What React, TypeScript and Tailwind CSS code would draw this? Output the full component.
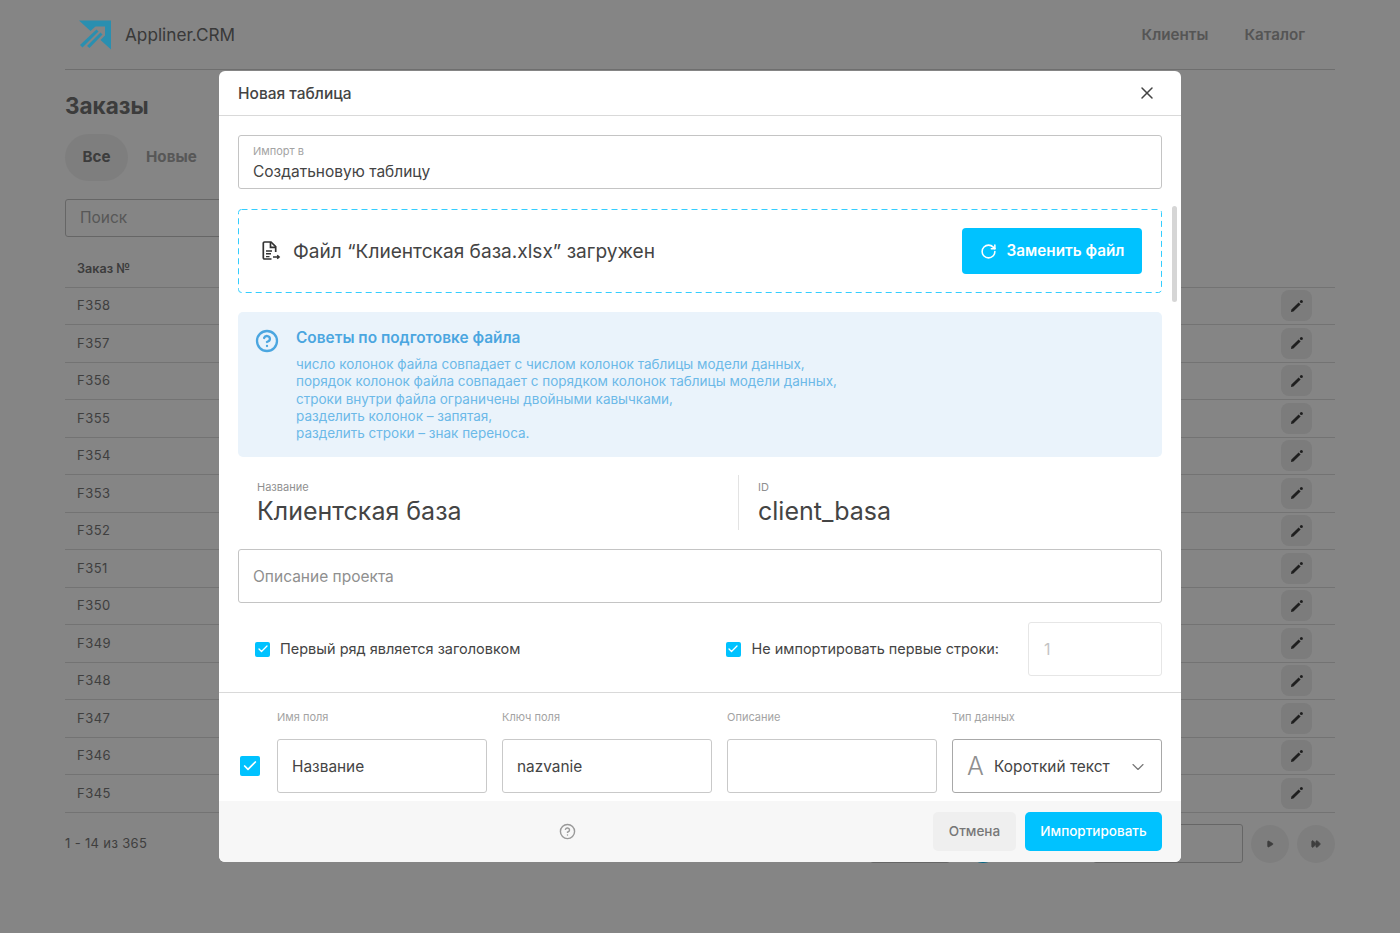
import React from 'react';
import { X, RotateCw, ChevronDown, Check, CircleHelp, Play, FastForward } from 'lucide-react';

const orders = ['F358', 'F357', 'F356', 'F355', 'F354', 'F353', 'F352', 'F351', 'F350', 'F349', 'F348', 'F347', 'F346', 'F345'];

const tips = [
  'число колонок файла совпадает с числом колонок таблицы модели данных,',
  'порядок колонок файла совпадает с порядком колонок таблицы модели данных,',
  'строки внутри файла ограничены двойными кавычками,',
  'разделить колонок – запятая,',
  'разделить строки – знак переноса.',
];

const Logo = () => (
  <svg width="32" height="30" viewBox="0 0 32 30" fill="none" className="relative z-10">
    <path d="M0 0.5H32V29.5L21.5 20L26 15.5V6.5H16.5L11.5 11Z" fill="#2a8fb0" />
    <path d="M1 25L17.5 9.5L19.5 11.5L3.5 27.5Z" fill="#2a8fb0" />
    <path d="M8 26L21.5 12.5L23.5 14.5L10.5 28Z" fill="#2a8fb0" />
  </svg>
);

const FileIcon = () => (
  <svg width="20" height="20" viewBox="0 0 20 20" fill="none" stroke="#333" strokeWidth="1.7">
    <path d="M10.5 18H3.5A1.2 1.2 0 0 1 2.3 16.8V2.2A1.2 1.2 0 0 1 3.5 1H10L14.7 5.7V11" />
    <path d="M9.5 1V6.3H14.7" />
    <path d="M5 10H11M5 12.8H10M5 15.6H8.5" strokeWidth="1.4" />
    <path d="M12 16H18M16.2 14.2L18.2 16L16.2 17.8" strokeWidth="1.4" />
  </svg>
);

const PenIcon = () => (
  <svg width="14" height="14" viewBox="0 0 14 14" fill="none">
    <path d="M1 13L1.4 10.6L8.6 3.4L10.6 5.4L3.4 12.6Z" fill="#3d3d3d" />
    <circle cx="11.4" cy="2.6" r="1.5" fill="#3d3d3d" />
  </svg>
);

const Checkbox = ({ big }: { big?: boolean }) => (
  <span className={big ? 'flex h-[20px] w-[20px] items-center justify-center rounded-[2px] bg-[#00c2ff]' : 'flex h-[15px] w-[15px] items-center justify-center rounded-[2px] bg-[#00c2ff]'}>
    <Check size={big ? 16 : 12} color="#fff" strokeWidth={2.6} />
  </span>
);

const Field = ({ label, value, width }: { label: string; value?: string; width: string }) => (
  <div className={`flex flex-col ${width}`}>
    <span className="mb-[15px] text-[11px] leading-[13px] text-[#a3a3a3]">{label}</span>
    <div className="flex h-[54px] items-center rounded-[3px] border border-[#c9c9c9] px-[14px] pt-[2px] text-[15.4px] text-[#444]">{value}</div>
  </div>
);

export default function App() {
  return (
    <div className="relative h-[933px] w-[1400px] overflow-hidden bg-white font-['Inter',sans-serif]">
      {/* page behind the dialog */}
      <div className="flex h-full flex-col px-[65px]">
        <header className="flex h-[70px] shrink-0 items-center justify-between border-b border-[#d4d4d4] pl-[14px] pr-[30px]">
          <div className="flex items-center gap-[14px]">
            <Logo />
            <span className="text-[17.2px] text-[#6e6e6e]">Appliner.CRM</span>
          </div>
          <nav className="mt-[1px] flex gap-[36px] text-[15.2px] font-semibold text-[#a3a3a3]">
            <span>Клиенты</span>
            <span>Каталог</span>
          </nav>
        </header>
        <h1 className="mt-[20px] text-[22.5px] font-bold leading-[32px] text-[#737373]">Заказы</h1>
        <div className="mt-[12px] flex items-center gap-[18px] text-[15.2px] font-bold">
          <span className="flex h-[47px] w-[63px] items-center justify-center rounded-full bg-[#f2f2f2] text-[#737373]">Все</span>
          <span className="text-[#a8a8a8]">Новые</span>
        </div>
        <div className="mt-[18px] flex h-[38px] w-[300px] items-center rounded-[3px] border border-[#c4c4c4] px-[14px] text-[15.5px] text-[#a8a8a8]">Поиск</div>
        <div className="mt-[12.5px] flex h-[38px] items-center border-b border-[#dcdcdc] px-[12px] pt-[2px] text-[12.6px] font-semibold text-[#737373]">Заказ №</div>
        {orders.map(o => (
          <div key={o} className="flex h-[37.5px] shrink-0 items-center justify-between border-b border-[#dcdcdc] pl-[12px] pr-[23px] text-[13px] tracking-[0.5px] text-[#7a7a7a]">
            <span>{o}</span>
            <span className="flex h-[31px] w-[31px] items-center justify-center rounded-[8px] bg-[#ededed]">
              <PenIcon />
            </span>
          </div>
        ))}
        <div className="mt-[11.5px] flex h-[39px] items-center text-[13px] tracking-[0.35px] text-[#7a7a7a]">
          <span>1 - 14 из 365</span>
          <div className="ml-auto flex items-center gap-[8px]">
            <span className="mr-[6px] h-[39px] w-[80px] rounded-[3px] border border-[#c4c4c4]" />
            <span className="mr-[83px] h-[38px] w-[38px] rounded-full bg-[#00c2ff]" />
            <span className="h-[39px] w-[150px] rounded-[3px] border border-[#c4c4c4]" />
            <span className="flex h-[38px] w-[38px] items-center justify-center rounded-full bg-[#f2f2f2]">
              <Play size={8} color="#777" fill="#777" />
            </span>
            <span className="flex h-[38px] w-[38px] items-center justify-center rounded-full bg-[#f2f2f2]">
              <FastForward size={10} color="#777" fill="#777" />
            </span>
          </div>
        </div>
      </div>

      {/* dim + dialog */}
      <div className="absolute inset-0 flex items-start justify-center bg-[rgba(0,0,0,0.48)] pt-[71px]">
        <div className="relative flex h-[791px] w-[962px] flex-col overflow-hidden rounded-[6px] bg-white text-[#444]">
          <div className="flex h-[45px] shrink-0 items-center justify-between border-b border-[#d9d9d9] pl-[19px] pr-[24px]">
            <span className="mt-[1px] text-[15.5px] font-medium">Новая таблица</span>
            <X size={20} color="#444" strokeWidth={1.8} />
          </div>

          <div className="min-h-0 flex-1 overflow-hidden">
            <div className="px-[19px] pt-[19px]">
              <div className="flex h-[54px] flex-col justify-center rounded-[3px] border border-[#c4c4c4] px-[14px] pt-[3px]">
                <span className="text-[11px] leading-[13px] text-[#a3a3a3]">Импорт в</span>
                <span className="mt-[4px] text-[15.5px] leading-[20px]">Создатьновую таблицу</span>
              </div>

              <div className="relative mt-[20px] flex h-[84px] items-center justify-between pl-[23px] pr-[20px]">
                <svg width="924" height="84" className="absolute left-0 top-0" fill="none">
                  <rect x="0.5" y="0.5" width="923" height="83" rx="3" stroke="#33ceff" strokeDasharray="6 4" />
                </svg>
                <div className="mt-[1px] flex items-center gap-[12px]">
                  <FileIcon />
                  <span className="text-[19.1px] text-[#444]">Файл “Клиентская база.xlsx” загружен</span>
                </div>
                <span className="flex h-[46px] w-[180px] items-center justify-center gap-[10px] rounded-[4px] bg-[#00c2ff] text-[15.3px] font-semibold text-white">
                  <RotateCw size={17} strokeWidth={2.2} />
                  Заменить файл
                </span>
              </div>

              <div className="mt-[19px] flex h-[145px] gap-[17px] rounded-[5px] bg-[#eaf3fb] pl-[17px] pt-[16px]">
                <CircleHelp size={24} color="#4ba6e0" strokeWidth={2.3} className="mt-[1px] shrink-0" />
                <div>
                  <div className="text-[15.4px] font-semibold leading-[20px] text-[#4ba6e0]">Советы по подготовке файла</div>
                  <div className="mt-[8px] text-[13.5px] leading-[17.3px] text-[#6cb9e8]">
                    {tips.map(t => <div key={t}>{t}</div>)}
                  </div>
                </div>
              </div>

              <div className="mt-[18px] flex h-[55px]">
                <div className="w-[500px] pl-[19px]">
                  <div className="pt-[6px] text-[11px] leading-[13px] text-[#8f8f8f]">Название</div>
                  <div className="mt-[1px] text-[25px] leading-[32px]">Клиентская база</div>
                </div>
                <div className="border-l border-[#e3e3e3] pl-[19px]">
                  <div className="pt-[6px] text-[11px] leading-[13px] text-[#8f8f8f]">ID</div>
                  <div className="mt-[1px] text-[25px] leading-[32px]">client_basa</div>
                </div>
              </div>

              <div className="mt-[19px] flex h-[54px] items-center rounded-[3px] border border-[#c4c4c4] px-[14px] pt-[2px] text-[15.5px] text-[#8f8f8f]">Описание проекта</div>

              <div className="mt-[19px] flex h-[54px] items-center pl-[17px] text-[14.5px]">
                <Checkbox />
                <span className="ml-[10px]">Первый ряд является заголовком</span>
                <span className="ml-auto"><Checkbox /></span>
                <span className="ml-[11px] text-[14.45px]">Не импортировать первые строки:</span>
                <span className="ml-[29px] flex h-[54px] w-[134px] items-center rounded-[3px] border border-[#e6e6e6] px-[15px] text-[16px] text-[#c4c4c4]">1</span>
              </div>
            </div>

            <div className="mt-[16px] flex items-end border-t border-[#d9d9d9] pt-[18px] pl-[21px] pr-[19px]">
              <span className="mb-[17px] mr-[17px]"><Checkbox big /></span>
              <div className="flex gap-[15px]">
                <Field label="Имя поля" value="Название" width="w-[210px]" />
                <Field label="Ключ поля" value="nazvanie" width="w-[210px]" />
                <Field label="Описание" width="w-[210px]" />
                <div className="flex w-[210px] flex-col">
                  <span className="mb-[15px] text-[11px] leading-[13px] text-[#a3a3a3]">Тип данных</span>
                  <div className="flex h-[54px] items-center rounded-[3px] border border-[#a8a8a8] pl-[14px] pr-[13px] pt-[2px] text-[15.4px] text-[#444]">
                    <span className="w-[27px] text-[25px] font-light text-[#8f8f8f]">A</span>
                    <span>Короткий текст</span>
                    <ChevronDown size={20} color="#777" strokeWidth={1.4} className="ml-auto" />
                  </div>
                </div>
              </div>
            </div>
          </div>

          <div className="flex h-[61px] shrink-0 items-center bg-[#f7f7f7] pr-[19px]">
            <CircleHelp size={17} color="#999" strokeWidth={2} className="ml-[340px]" />
            <span className="ml-auto flex h-[39px] w-[83px] items-center justify-center rounded-[5px] bg-[#efefef] text-[13.5px] font-medium text-[#777]">Отмена</span>
            <span className="ml-[9px] flex h-[39px] w-[137px] items-center justify-center rounded-[5px] bg-[#00c2ff] text-[13.5px] font-medium text-white">Импортировать</span>
          </div>

          {/* scrollbar thumb */}
          <span className="absolute right-[4px] top-[135px] h-[96px] w-[5px] rounded-full bg-[#d6d6d6]" />
        </div>
      </div>
    </div>
  );
}
